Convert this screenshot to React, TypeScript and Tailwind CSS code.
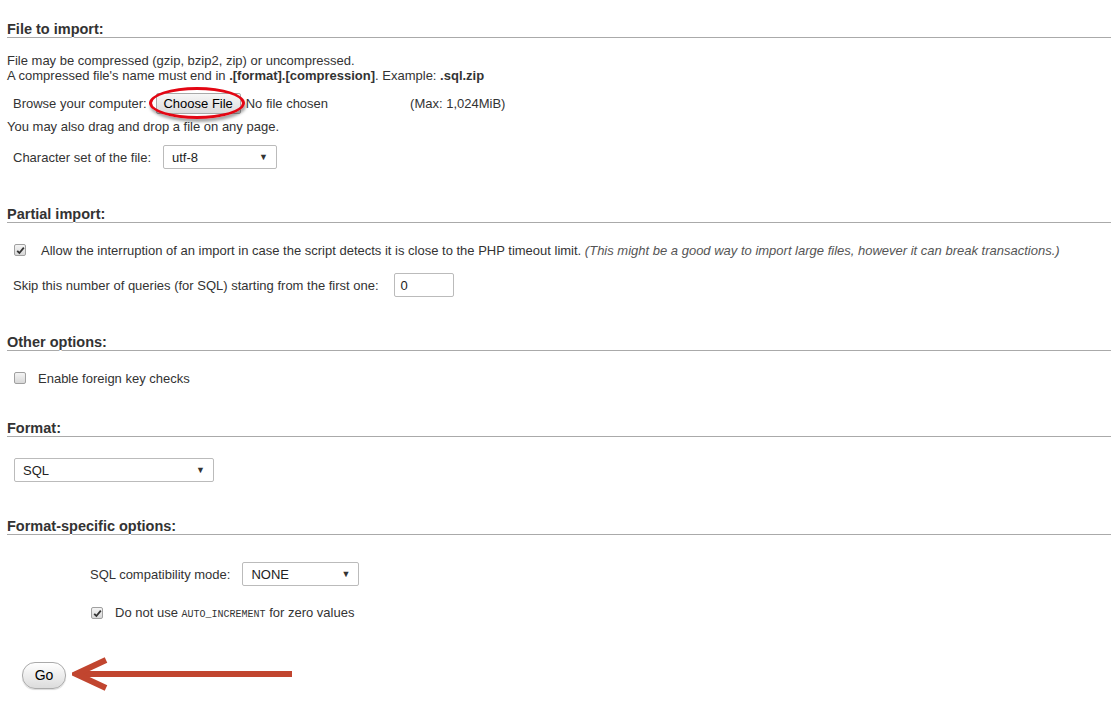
import React from "react";

const font = { fontFamily: '"Liberation Sans", Arial, sans-serif' };

function Heading({ children, className = "" }: { children: React.ReactNode; className?: string }) {
  return (
    <div className={"h-[17px] border-b border-[#aaa] text-[14.5px] leading-[16px] font-bold text-[#333] [text-shadow:0_1px_0_#fff] " + className}>
      {children}
    </div>
  );
}

function Select({ value, className = "" }: { value: string; className?: string }) {
  return (
    <div className={"h-[24px] flex items-center justify-between border border-[#bbb] rounded-[2px] bg-white pl-[8px] pr-[8px] text-[13px] text-[#222] " + className}>
      <span>{value}</span>
      <span className="text-[9px] text-[#333]">▼</span>
    </div>
  );
}

function Checkbox({ checked }: { checked?: boolean }) {
  return (
    <span className="w-[12px] h-[12px] rounded-[2px] border border-[#a0a0a0] bg-gradient-to-b from-[#f4f4f4] to-[#d8d8d8] flex items-center justify-center shrink-0">
      {checked && (
        <svg width="9" height="9" viewBox="0 0 9 9">
          <path d="M1.2 4.8 L3.4 7 L7.8 1.6" fill="none" stroke="#333" strokeWidth="1.8" />
        </svg>
      )}
    </span>
  );
}

export default function App() {
  return (
    <div className="min-h-screen bg-white pl-[7px] pt-[21px] text-[13px] leading-[15px] text-[#333]" style={font}>
      {/* File to import */}
      <Heading>File to import:</Heading>
      <div className="mt-[15px]">
        <p>File may be compressed (gzip, bzip2, zip) or uncompressed.</p>
        <p>
          A compressed file's name must end in <b>.[format].[compression]</b>. Example: <b>.sql.zip</b>
        </p>
      </div>
      <div className="mt-[10px] h-[21px] flex items-center pl-[6px]">
        <span>Browse your computer:</span>
        <span className="relative ml-[9px]">
          <span className="h-[21px] w-[85px] flex items-center justify-center border border-[#a9a9a9] rounded-[2px] bg-gradient-to-b from-[#f6f6f6] to-[#dcdcdc] text-[13px] text-black">
            Choose File
          </span>
          <span className="absolute left-[-7px] top-[-6px] w-[96px] h-[32px] rounded-[50%] border-[3px] border-[#e30613] shadow-[1px_3px_3px_rgba(0,0,0,0.35)]" />
        </span>
        <span className="ml-[5px]">No file chosen</span>
        <span className="ml-[82px]">(Max: 1,024MiB)</span>
      </div>
      <p className="mt-[5px]">You may also drag and drop a file on any page.</p>
      <div className="mt-[11px] flex items-center pl-[6px]">
        <span>Character set of the file:</span>
        <Select value="utf-8" className="ml-[12px] w-[114px]" />
      </div>

      {/* Partial import */}
      <Heading className="mt-[37px]">Partial import:</Heading>
      <div className="mt-[18px] h-[18px] flex items-center pl-[7px]">
        <Checkbox checked />
        <span className="ml-[15px]">
          Allow the interruption of an import in case the script detects it is close to the PHP timeout limit.{" "}
          <i className="text-[#555]">(This might be a good way to import large files, however it can break transactions.)</i>
        </span>
      </div>
      <div className="mt-[14px] flex items-center pl-[6px]">
        <span>Skip this number of queries (for SQL) starting from the first one:</span>
        <span className="ml-[15px] w-[60px] h-[24px] border border-[#bbb] rounded-[2px] flex items-center pl-[6px] text-[#222]">0</span>
      </div>

      {/* Other options */}
      <Heading className="mt-[37px]">Other options:</Heading>
      <div className="mt-[18px] h-[18px] flex items-center pl-[7px]">
        <Checkbox />
        <span className="ml-[12px]">Enable foreign key checks</span>
      </div>

      {/* Format */}
      <Heading className="mt-[33px]">Format:</Heading>
      <Select value="SQL" className="mt-[21px] ml-[7px] w-[200px]" />

      {/* Format-specific options */}
      <Heading className="mt-[36px]">Format-specific options:</Heading>
      <div className="mt-[27px] flex items-center pl-[83px]">
        <span>SQL compatibility mode:</span>
        <Select value="NONE" className="ml-[12px] w-[117px]" />
      </div>
      <div className="mt-[18px] h-[18px] flex items-center pl-[84px]">
        <Checkbox checked />
        <span className="ml-[12px]">
          Do not use{" "}
          <code className="text-[10px]" style={{ fontFamily: '"Liberation Mono", monospace' }}>
            AUTO_INCREMENT
          </code>{" "}
          for zero values
        </span>
      </div>

      {/* Go */}
      <div className="mt-[35px] flex items-center pl-[15px]">
        <span className="w-[44px] h-[27px] rounded-[13px] border border-[#aaa] bg-gradient-to-b from-[#ffffff] to-[#dcdcdc] flex items-center justify-center text-[14px] text-black shadow-[0_1px_1px_rgba(0,0,0,0.15)]">
          Go
        </span>
        <svg width="222" height="36" viewBox="0 0 222 36" className="ml-[6px]">
          <line x1="6" y1="17" x2="220" y2="17" stroke="#c1452f" strokeWidth="6" />
          <path d="M34 3 L4 17 L34 31" fill="none" stroke="#c1452f" strokeWidth="6" strokeLinejoin="miter" />
        </svg>
      </div>
    </div>
  );
}
